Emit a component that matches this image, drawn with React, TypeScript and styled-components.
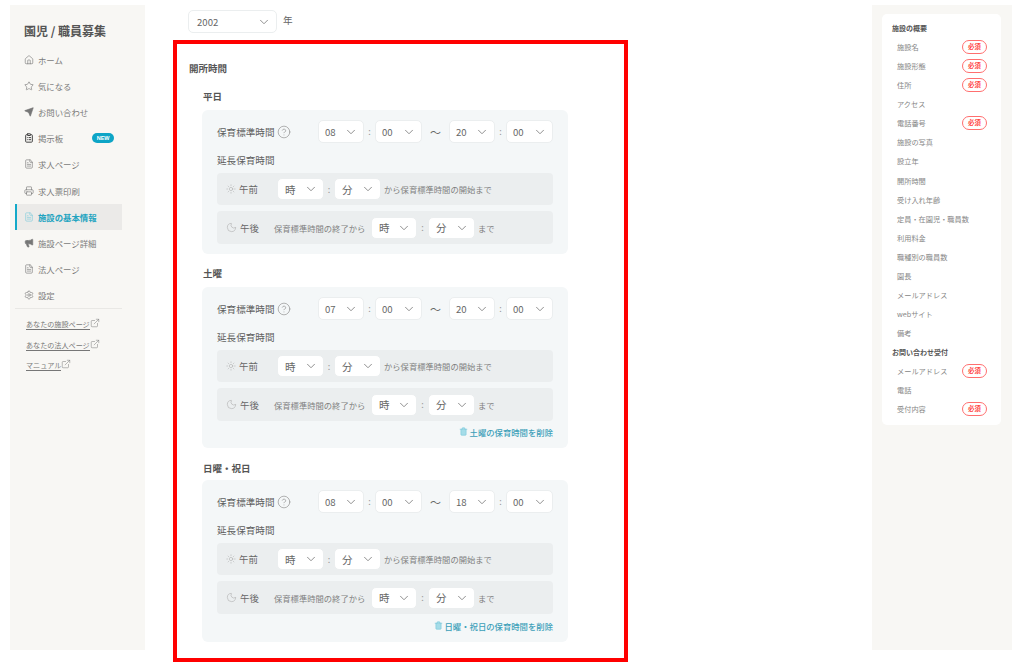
import React from 'react';
import styled, { createGlobalStyle } from 'styled-components';
import {
 Home,
 Star,
 Send,
 ClipboardList,
 FileText,
 Printer,
 Megaphone,
 Settings,
 ExternalLink,
 CircleHelp,
 ChevronDown,
 Sun,
 Moon,
 Trash2,
} from 'lucide-react';

const GlobalStyle = createGlobalStyle`
 html, body {
  margin: 0;
  padding: 0;
  background: #fff;
  font-family: "Noto Sans CJK JP", "Noto Sans", "Liberation Sans", sans-serif;
  color: #555;
 }
 * { box-sizing: border-box; }
`;

const Page = styled.div`
 position: relative;
 display: flex;
 align-items: flex-start;
 width: 1024px;
 height: 666px;
 overflow: hidden;
 padding-left: 10px;
`;

const Sidebar = styled.nav`
 width: 135px;
 height: 645px;
 margin-top: 5px;
 padding: 18px 23px 0 5px;
 background: #f8f7f4;
 flex-shrink: 0;
`;
const Logo = styled.div`
 height: 16px;
 margin-left: 9px;
 margin-bottom: 7.5px;
 font-size: 12px;
 line-height: 16px;
 font-weight: 700;
 color: #555;
 white-space: nowrap;
`;
const NavItem = styled.div<{ $active?: boolean; $dark?: boolean; $filled?: boolean }>`
 display: flex;
 align-items: center;
 gap: 4px;
 height: 26.2px;
 padding-left: ${p => (p.$active ? '7px' : '9px')};
 font-size: 8.4px;
 font-weight: ${p => (p.$active ? 700 : 400)};
 color: ${p => (p.$active ? '#21a3c0' : '#7b7b7b')};
 background: ${p => (p.$active ? '#ebeae8' : 'transparent')};
 border-left: ${p => (p.$active ? '2px solid #14a9c9' : 'none')};
 white-space: nowrap;
 svg {
  color: ${p => (p.$dark ? '#444' : p.$active ? '#7fcbdc' : '#777')};
  fill: ${p => (p.$filled ? '#777' : 'none')};
 }
`;
const NewBadge = styled.span`
 margin-left: 25px;
 width: 22px;
 height: 10px;
 border-radius: 5px;
 background: #0ea5c6;
 color: #fff;
 text-align: center;
 font-size: 5.5px;
 line-height: 10px;
 font-weight: 700;
 font-family: "Liberation Sans", sans-serif;
`;
const Divider = styled.div`
 height: 1px;
 background: #e9e8e5;
`;
const LinkList = styled.div`
 display: flex;
 flex-direction: column;
 gap: 9.5px;
 margin-top: 10px;
 padding-left: 11px;
`;
const SideLink = styled.div`
 display: flex;
 align-items: flex-start;
 height: 11px;
 font-size: 7.1px;
 line-height: 11px;
 color: #777;
 white-space: nowrap;
 span {
  border-bottom: 1px solid #777;
  height: 11px;
 }
 svg { margin-top: -1px; }
`;

const Main = styled.main`
 width: 727px;
 flex-shrink: 0;
 padding: 10px 0 0 43px;
`;
const YearRow = styled.div`
 display: flex;
 align-items: center;
 gap: 6px;
 font-size: 9.6px;
 color: #666;
`;
const YearLabel = styled.span`
 margin-bottom: 3px;
`;
const SectionTitle = styled.h2`
 margin: 29px 0 0 1px;
 height: 14px;
 font-size: 9.5px;
 line-height: 12px;
 font-weight: 700;
 color: #555;
`;
const DayTitle = styled.h3<{ $gap: number }>`
 margin: ${p => p.$gap}px 0 0 15px;
 height: 14px;
 font-size: 9.5px;
 line-height: 12px;
 font-weight: 700;
 color: #555;
`;
const Card = styled.section<{ $top: number }>`
 width: 366px;
 margin: ${p => p.$top}px 0 0 14px;
 padding: 10px 15px;
 background: #f4f7f8;
 border-radius: 6px;
`;
const StandardRow = styled.div`
 display: flex;
 align-items: center;
 height: 23px;
`;
const RowLabel = styled.span`
 width: 58px;
 font-size: 9.6px;
 color: #5f5f5f;
 white-space: nowrap;
`;
const HelpWrap = styled.span`
 display: flex;
 width: 43px;
 padding-left: 2px;
 color: #8a8a8a;
`;
const SelectBox = styled.div<{ $width: number; $height?: number; $large?: boolean; $pad?: number }>`
 display: flex;
 align-items: center;
 justify-content: space-between;
 width: ${p => p.$width}px;
 height: ${p => p.$height ?? 23}px;
 padding: 0 5px 0 ${p => p.$pad ?? 6}px;
 flex-shrink: 0;
 background: #fff;
 border: 1px solid #ebeeef;
 border-radius: 5px;
 font-size: ${p => (p.$large ? 10.5 : 9.6)}px;
 color: #666;
 svg { color: #8f8f8f; }
`;
const Colon = styled.span<{ $width?: number }>`
 width: ${p => p.$width ?? 11}px;
 text-align: center;
 font-size: 9px;
 color: #999;
 flex-shrink: 0;
`;
const Tilde = styled.span`
 width: 27px;
 text-align: center;
 font-size: 11px;
 color: #666;
`;
const ExtendLabel = styled.div`
 height: 14px;
 margin-top: 10px;
 font-size: 9.6px;
 line-height: 14px;
 color: #5f5f5f;
`;
const ExtendRow = styled.div<{ $height: number }>`
 display: flex;
 align-items: center;
 height: ${p => p.$height}px;
 margin-top: 6px;
 padding-left: 9px;
 background: #ebeeef;
 border-radius: 4px;
`;
const Period = styled.span<{ $width: number }>`
 display: flex;
 align-items: center;
 gap: 3px;
 width: ${p => p.$width}px;
 font-size: 9.4px;
 color: #666;
 flex-shrink: 0;
 svg { color: #a9a9a9; }
`;
const Note = styled.span<{ $gap: number; $width?: number }>`
 margin-left: ${p => p.$gap}px;
 ${p => (p.$width ? `width: ${p.$width}px;` : '')}
 font-size: 8.3px;
 color: #808080;
 white-space: nowrap;
 flex-shrink: 0;
`;
const DeleteRow = styled.div<{ $top: number }>`
 display: flex;
 align-items: center;
 justify-content: flex-end;
 gap: 2px;
 height: 13px;
 margin-top: ${p => p.$top}px;
 font-size: 8.35px;
 font-weight: 500;
 color: #3c9fb8;
 svg { color: #6cc3d6; fill: #a5dce8; }
`;

const Aside = styled.aside`
 width: 140px;
 height: 645px;
 margin-top: 5px;
 padding: 9px 11px 0 10px;
 background: #f8f7f4;
 flex-shrink: 0;
`;
const GuideCard = styled.div`
 height: 411px;
 padding: 4.5px 14px 0 10px;
 background: #fff;
 border-radius: 5px;
`;
const GuideHeading = styled.div`
 height: 18.8px;
 font-size: 7px;
 line-height: 19px;
 font-weight: 700;
 color: #555;
`;
const GuideItem = styled.div`
 display: flex;
 align-items: center;
 justify-content: space-between;
 height: 19.1px;
 padding-left: 5px;
 font-size: 7.2px;
 color: #868686;
 white-space: nowrap;
`;
const Required = styled.span`
 width: 25px;
 height: 14px;
 border: 1px solid #ff6f6f;
 border-radius: 7px;
 text-align: center;
 font-size: 6.4px;
 line-height: 12px;
 font-weight: 700;
 color: #f44;
`;

const RedFrame = styled.div`
 position: absolute;
 left: 173px;
 top: 40px;
 width: 455px;
 height: 622px;
 border: 4px solid #f00;
 pointer-events: none;
`;

const Select: React.FC<{ value: string; width?: number; height?: number; large?: boolean; pad?: number }> = ({
 value,
 width = 46,
 height,
 large,
 pad,
}) => (
 <SelectBox $width={width} $height={height} $large={large} $pad={large ? 7 : pad}>
  {value}
  <ChevronDown size={14} strokeWidth={1.7} />
 </SelectBox>
);

const navItems = [
 { label: 'ホーム', Icon: Home },
 { label: '気になる', Icon: Star },
 { label: 'お問い合わせ', Icon: Send, filled: true },
 { label: '掲示板', Icon: ClipboardList, badge: true, dark: true },
 { label: '求人ページ', Icon: FileText },
 { label: '求人票印刷', Icon: Printer },
 { label: '施設の基本情報', Icon: FileText, active: true },
 { label: '施設ページ詳細', Icon: Megaphone, filled: true },
 { label: '法人ページ', Icon: FileText },
 { label: '設定', Icon: Settings },
];

const guide: { label: string; required?: boolean; heading?: boolean }[] = [
 { label: '施設の概要', heading: true },
 { label: '施設名', required: true },
 { label: '施設形態', required: true },
 { label: '住所', required: true },
 { label: 'アクセス' },
 { label: '電話番号', required: true },
 { label: '施設の写真' },
 { label: '設立年' },
 { label: '開所時間' },
 { label: '受け入れ年齢' },
 { label: '定員・在園児・職員数' },
 { label: '利用料金' },
 { label: '職種別の職員数' },
 { label: '園長' },
 { label: 'メールアドレス' },
 { label: 'webサイト' },
 { label: '備考' },
 { label: 'お問い合わせ受付', heading: true },
 { label: 'メールアドレス', required: true },
 { label: '電話' },
 { label: '受付内容', required: true },
];

const days = [
 { title: '平日', gap: 14, top: 6, start: '08', end: '20' },
 { title: '土曜', gap: 13, top: 6, start: '07', end: '20', remove: '土曜の保育時間を削除', removeTop: 4 },
 { title: '日曜・祝日', gap: 14, top: 4, start: '08', end: '18', remove: '日曜・祝日の保育時間を削除', removeTop: 5 },
];

const App: React.FC = () => (
 <Page>
  <GlobalStyle />
  <Sidebar>
   <Logo>園児 / 職員募集</Logo>
   {navItems.map(({ label, Icon, active, badge, dark, filled }) => (
    <NavItem key={label} $active={active} $dark={dark} $filled={filled}>
     <Icon size={10} strokeWidth={dark ? 2.4 : 1.5} />
     {label}
     {badge && <NewBadge>NEW</NewBadge>}
    </NavItem>
   ))}
   <Divider />
   <LinkList>
    {['あなたの施設ページ', 'あなたの法人ページ', 'マニュアル'].map(label => (
     <SideLink key={label}>
      <span>{label}</span>
      <ExternalLink size={10} strokeWidth={1.2} />
     </SideLink>
    ))}
   </LinkList>
  </Sidebar>

  <Main>
   <YearRow>
    <Select value="2002" width={89} pad={8} />
    <YearLabel>年</YearLabel>
   </YearRow>
   <SectionTitle>開所時間</SectionTitle>
   {days.map(day => (
    <React.Fragment key={day.title}>
     <DayTitle $gap={day.gap}>{day.title}</DayTitle>
     <Card $top={day.top}>
      <StandardRow>
       <RowLabel>保育標準時間</RowLabel>
       <HelpWrap>
        <CircleHelp size={14} strokeWidth={1.1} />
       </HelpWrap>
       <Select value={day.start} />
       <Colon>:</Colon>
       <Select value="00" width={47} />
       <Tilde>～</Tilde>
       <Select value={day.end} />
       <Colon>:</Colon>
       <Select value="00" width={47} />
      </StandardRow>
      <ExtendLabel>延長保育時間</ExtendLabel>
      <ExtendRow $height={32}>
       <Period $width={51}>
        <Sun size={10} strokeWidth={1.2} />
        午前
       </Period>
       <Select value="時" width={47} height={22} large />
       <Colon $width={10}>:</Colon>
       <Select value="分" width={47} height={22} large />
       <Note $gap={3}>から保育標準時間の開始まで</Note>
      </ExtendRow>
      <ExtendRow $height={33}>
       <Period $width={48}>
        <Moon size={11} strokeWidth={1.2} />
        午後
       </Period>
       <Note $gap={0} $width={97}>保育標準時間の終了から</Note>
       <Select value="時" height={22} large />
       <Colon>:</Colon>
       <Select value="分" width={47} height={22} large />
       <Note $gap={3}>まで</Note>
      </ExtendRow>
      {day.remove && (
       <DeleteRow $top={day.removeTop}>
        <Trash2 size={9} strokeWidth={1.4} />
        {day.remove}
       </DeleteRow>
      )}
     </Card>
    </React.Fragment>
   ))}
  </Main>

  <Aside>
   <GuideCard>
    {guide.map(item =>
     item.heading ? (
      <GuideHeading key={item.label}>{item.label}</GuideHeading>
     ) : (
      <GuideItem key={item.label}>
       {item.label}
       {item.required && <Required>必須</Required>}
      </GuideItem>
     ),
    )}
   </GuideCard>
  </Aside>

  <RedFrame />
 </Page>
);

export default App;
